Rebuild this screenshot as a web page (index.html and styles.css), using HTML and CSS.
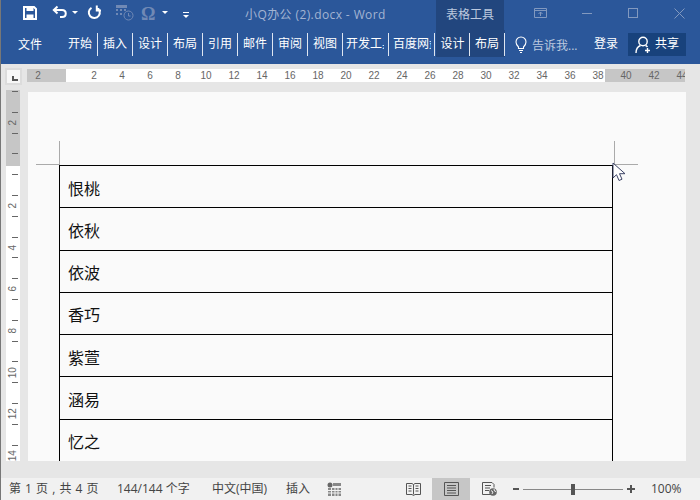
FILE: index.html
```html
<!DOCTYPE html>
<html lang="zh-CN">
<head>
  <meta charset="UTF-8" />
  <title>小Q办公 (2).docx - Word</title>
  <link rel="stylesheet" href="styles.css">
</head>
<body>
  <div class="app">
    <header class="ribbon">
      <div class="titlebar">
        <div class="qat">
          <svg class="ic-save" width="16" height="16" viewBox="0 0 16 16"><path d="M2 2h10l2 2v10H2z" fill="none" stroke="#fff" stroke-width="2"/><rect x="4.500" y="2" width="7" height="4" fill="#fff"/><rect x="4.500" y="9.500" width="7" height="4" fill="#fff"/></svg>
          <svg class="ic-undo" width="16" height="14" viewBox="0 0 16 14"><path d="M5.500 1.500 1.800 5l3.700 3.500M2.500 5H10c5 0 5 7 0 7H8" fill="none" stroke="#fff" stroke-width="2"/></svg>
          <span class="caret ic-c1"></span>
          <svg class="ic-redo" width="15" height="15" viewBox="0 0 15 15"><path d="M9.500 2.500a5.500 5.500 0 1 1-5 .3M9.800 .5v5H14" fill="none" stroke="#fff" stroke-width="2"/></svg>
          <svg class="ic-date" width="19" height="17" viewBox="0 0 19 17"><path d="M1 1h11v3H1zM1 5h2v2H1zM5 5h2v2H5zM9 5h2v2H9zM1 9h2v2H1zM5 9h2v2H5z" fill="#7089b5"/><circle cx="13.500" cy="11.500" r="4.500" fill="none" stroke="#7089b5"/><path d="M13.500 9v3h2" fill="none" stroke="#7089b5"/></svg>
          <span class="omega">Ω</span>
          <span class="caret ic-c2"></span>
          <span class="more ic-c3"></span>
        </div>
        <div class="doc-title">小Q办公 (2).docx - Word</div>
        <div class="tool-title">表格工具</div>
        <div class="win-btns">
          <svg class="w-opt" width="13" height="10" viewBox="0 0 13 10"><path d="M.5.500h12v9H.5zM.5 2.500h12M6.500 8V4M4.500 6l2-2 2 2" fill="none" stroke="#8299bf"/></svg>
          <span class="w-min"></span>
          <span class="w-max"></span>
          <svg class="w-close" width="11" height="11" viewBox="0 0 11 11"><path d="M.5.500l10 10M10.500.500l-10 10" fill="none" stroke="#8299bf"/></svg>
        </div>
      </div>
      <nav class="tabs">
        <div class="file-tab">文件</div>
        <div class="tab">开始</div>
        <div class="tab">插入</div>
        <div class="tab">设计</div>
        <div class="tab">布局</div>
        <div class="tab">引用</div>
        <div class="tab">邮件</div>
        <div class="tab">审阅</div>
        <div class="tab">视图</div>
        <div class="tab tab-wide tab-dev"><span>开发工具</span></div>
        <div class="tab tab-wide"><span>百度网盘</span></div>
        <div class="context-tabs">
          <div class="tab">设计</div>
          <div class="tab">布局</div>
        </div>
        <div class="tell">
          <svg width="12" height="17" viewBox="0 0 12 17"><path d="M3.500 11C2 9.500 1 8.500 1 6a5 5 0 0 1 10 0c0 2.500-1 3.500-2.500 5v1.500h-5zM4 14.500h4M5 16.500h2" fill="none" stroke="#fff" stroke-width="1.100"/></svg>
          <span>告诉我...</span>
        </div>
        <div class="signin">登录</div>
        <div class="share">
          <svg width="17" height="18" viewBox="0 0 17 18"><circle cx="8" cy="5.500" r="4.200" fill="none" stroke="#fff" stroke-width="1.400"/><path d="M1 17c0-4 2-6.500 4.500-7.500M10.500 9.500c.8.300 1.500.8 2 1.500M12.500 12v5M10 14.500h5" fill="none" stroke="#fff" stroke-width="1.400"/></svg>
          <span>共享</span>
        </div>
      </nav>
    </header>

    <main class="workspace">
      <div class="ruler-row">
        <div class="ruler-corner"><span class="tab-stop"></span></div>
        <div class="h-ruler">
          <span>2</span><span></span><span>2</span><span>4</span><span>6</span><span>8</span><span>10</span><span>12</span><span>14</span><span>16</span><span>18</span><span>20</span><span>22</span><span>24</span><span>26</span><span>28</span><span>30</span><span>32</span><span>34</span><span>36</span><span>38</span><span>40</span><span>42</span><span>44</span>
        </div>
      </div>
      <div class="doc-row">
        <div class="v-ruler">
          <span>2</span><span></span><span>2</span><span>4</span><span>6</span><span>8</span><span>10</span><span>12</span><span>14</span>
        </div>
        <div class="page">
          <i class="crop crop-lv"></i>
          <i class="crop crop-lh"></i>
          <i class="crop crop-rv"></i>
          <i class="crop crop-rh"></i>
          <table class="doc-table">
            <tr><td>恨桃</td></tr>
            <tr><td>依秋</td></tr>
            <tr><td>依波</td></tr>
            <tr><td>香巧</td></tr>
            <tr><td>紫萱</td></tr>
            <tr><td>涵易</td></tr>
            <tr><td>忆之</td></tr>
          </table>
          <svg class="cursor" width="14" height="20" viewBox="0 0 14 20"><path d="M1 1v15l3.500-3.300 2.500 5.800 3-1.300-2.500-5.500H13z" fill="#fff" stroke="#3d4466"/></svg>
        </div>
      </div>
    </main>

    <footer class="statusbar">
      <span class="st-page">第 1 页 , 共 4 页</span>
      <span class="st-words">144/144 个字</span>
      <span class="st-lang">中文(中国)</span>
      <span class="st-ins">插入</span>
      <svg class="st-macro" width="14" height="14" viewBox="0 0 14 14"><circle cx="3" cy="3" r="2.500" fill="#666"/><path d="M6 1h8v3H6zM1 6h13v8H1z" fill="#888"/><path d="M1 8.500h13M1 11h13M4.500 6v8M8 6v8M11 6v8" stroke="#f1f1f1"/></svg>
      <div class="st-views">
        <div class="view-btn">
          <svg width="15" height="14" viewBox="0 0 15 14"><path d="M.5 1.500h5.500l1.500 1 1.500-1h5.500v11H9l-1.500 1-1.500-1H.5zM7.500 2.500v10M2.500 4h3M2.500 6.500h3M2.500 9h3M9.500 4h3M9.500 6.500h3M9.500 9h3" fill="none" stroke="#555"/></svg>
        </div>
        <div class="view-btn view-on">
          <svg width="15" height="14" viewBox="0 0 15 14"><path d="M.5.500h14v13H.5zM3 3.500h9M3 6h9M3 8.500h9M3 11h9" fill="none" stroke="#555"/></svg>
        </div>
        <div class="view-btn">
          <svg width="15" height="14" viewBox="0 0 15 14"><path d="M9 12.500H.5V.500H10l2 2v3M3 3.500h6M3 6h5M3 8.500h4" fill="none" stroke="#555"/><circle cx="11" cy="10" r="3.800" fill="#666"/><path d="M9 8.500l2 1.500-1 2M12 7l.5 2 1.500.5" fill="none" stroke="#f1f1f1"/></svg>
        </div>
      </div>
      <div class="zoom-bar">
        <span class="z-minus"></span>
        <div class="z-track"><span class="z-thumb"></span></div>
        <span class="z-plus"></span>
      </div>
      <span class="st-zoom">100%</span>
    </footer>
  </div>
</body>
</html>
```

FILE: styles.css
```css
* { box-sizing: border-box; }
html, body { margin: 0; padding: 0; }
body { width: 700px; height: 500px; overflow: hidden; font-family: "Open Sans", "Noto Sans CJK SC", sans-serif; }
.app { width: 700px; height: 500px; border-left: 1px solid #777; display: flex; flex-direction: column; }

/* ribbon */
.ribbon { height: 64px; background: #2b579a; color: #fff; }
.titlebar { height: 30px; display: flex; }
.qat { width: 244px; height: 30px; display: flex; align-items: flex-start; padding-left: 21px; }
.ic-save { margin-top: 5px; }
.ic-undo { margin: 5px 0 0 14px; }
.caret { width: 0; height: 0; border-left: 3px solid transparent; border-right: 3px solid transparent; border-top: 3px solid #fff; margin-top: 11px; }
.ic-c1 { margin-left: 4px; }
.ic-redo { margin: 5px 0 0 9px; }
.ic-date { margin: 4px 0 0 13px; }
.omega { margin-left: 7px; width: 15px; font: bold 18px/28px "Liberation Serif", serif; color: #7089b5; }
.ic-c2 { margin-left: 6px; }
.more { width: 6px; height: 6px; margin: 12px 0 0 15px; border-top: 1px solid #fff; position: relative; }
.more::after { content: ""; position: absolute; left: 0; top: 2px; border-left: 3px solid transparent; border-right: 3px solid transparent; border-top: 3px solid #fff; }
.doc-title { width: 191px; font-size: 12px; line-height: 30px; letter-spacing: .4px; color: #a3b4d2; white-space: nowrap; }
.tool-title { width: 68px; height: 30px; background: #22467e; font-size: 12px; line-height: 30px; text-align: center; color: #bcc9df; }
.win-btns { display: flex; align-items: flex-start; padding-left: 30px; }
.w-opt { margin-top: 8px; }
.w-min { width: 10px; height: 1px; background: #8299bf; margin: 13px 0 0 35px; }
.w-max { width: 10px; height: 10px; border: 1px solid #8299bf; margin: 8px 0 0 36px; }
.w-close { margin: 8px 0 0 36px; }

.tabs { height: 34px; display: flex; align-items: flex-start; font-size: 12px; }
.file-tab { width: 61px; padding: 4px 3px 0 0; line-height: 22px; text-align: center; }
.tab { width: 35px; height: 23px; margin-top: 3px; border-right: 1px solid #dfe6f1; line-height: 22px; text-align: center; white-space: nowrap; }
.tabs > .file-tab + .tab { margin-left: 1px; }
.tab-wide { width: 46px; padding: 0 3px 0 4px; }
.tab-dev { padding: 0 4px 0 3px; }
.tab-wide span { display: block; overflow: hidden; text-align: left; }
.context-tabs { display: flex; width: 69px; height: 27px; margin-left: 1px; background: #22467e; }
.context-tabs .tab { width: 34px; }
.context-tabs .tab + .tab { width: 35px; }
.tell { display: flex; align-items: center; gap: 5px; width: 89px; height: 23px; margin-top: 3px; padding-left: 10px; color: #bcc9df; }
.tell svg { flex: none; }
.signin { width: 34px; height: 23px; margin-top: 3px; line-height: 22px; }
.share { display: flex; align-items: center; gap: 3px; width: 58px; height: 23px; margin-top: 3px; padding-left: 7px; background: #18427c; }
.share span { line-height: 20px; margin-top: -2px; }

/* rulers and page */
.workspace { height: 414px; background: #e6e6e6; padding: 4px 14px 0 4px; }
.ruler-row { display: flex; height: 17px; }
.ruler-corner { width: 17px; height: 17px; background: #f7f7f7; border: 2px solid #dcdcdc; margin-right: 5px; position: relative; }
.tab-stop { position: absolute; left: 5px; top: 6px; width: 6px; height: 5px; border-left: 2px solid #555; border-bottom: 2px solid #555; }
.h-ruler { width: 658px; height: 13px; margin-top: 1px; display: flex; overflow: hidden; background: linear-gradient(90deg, #c6c6c6 39px, #fff 39px, #fff 578px, #c6c6c6 578px); font: 10px/13px "Liberation Sans", sans-serif; color: #666; }
.h-ruler span { flex: none; width: 28px; text-align: center; }
.h-ruler span:first-child { margin-left: -3px; }

.doc-row { display: flex; margin-top: 7px; }
.v-ruler { width: 14px; height: 371px; margin: -2px 8px 0 1px; overflow: hidden; padding-top: 12px; font: 10px/12px "Liberation Sans", sans-serif; color: #666;
  background: repeating-linear-gradient(transparent 0, transparent 1px, #666 1px, #666 2px, transparent 2px, transparent 20.8px) 6px 0 / 6px 100% no-repeat,
    linear-gradient(#c6c6c6 76px, #fff 76px); }
.v-ruler span { display: block; height: 41.6px; text-align: center; line-height: 41.6px; transform: rotate(-90deg); }
.page { flex: 1; height: 369px; background: #fafafa; position: relative; overflow: hidden; padding: 73px 0 0 31px; }
.crop { position: absolute; background: #aaa; }
.crop-lv { left: 31px; top: 49px; width: 1px; height: 24px; }
.crop-lh { left: 8px; top: 72px; width: 23px; height: 1px; }
.crop-rv { left: 586px; top: 49px; width: 1px; height: 24px; }
.crop-rh { left: 586px; top: 72px; width: 24px; height: 1px; }
.doc-table { width: 554px; border-collapse: collapse; table-layout: fixed; }
.doc-table td { height: 42.25px; padding: 4px 0 0 8px; border: 1px solid #000; font-size: 16px; line-height: 20px; color: #111; }
.cursor { position: absolute; left: 584px; top: 70px; }

/* status bar */
.statusbar { height: 22px; display: flex; align-items: center; background: #f1f1f1; font-size: 12px; color: #444; white-space: nowrap; }
.statusbar > span { margin-top: -2px; }
.st-page { width: 116px; padding-left: 8px; word-spacing: 1px; }
.st-words { width: 95px; }
.st-lang { width: 74px; }
.st-ins { width: 41px; }
.st-macro { flex: none; }
.st-views { display: flex; height: 22px; margin-left: 53px; }
.view-btn { width: 38px; display: flex; align-items: center; justify-content: center; }
.view-on { background: #c6c6c6; }
.zoom-bar { display: flex; align-items: center; margin-left: 5px; }
.z-minus { width: 6px; height: 2px; background: #555; }
.z-track { width: 100px; height: 1px; margin: 0 4px; background: #888; position: relative; }
.z-thumb { position: absolute; left: 48px; top: -5px; width: 4px; height: 11px; background: #555; }
.z-plus { width: 8px; height: 8px; background: linear-gradient(#555, #555) 0 3px / 8px 2px no-repeat, linear-gradient(#555, #555) 3px 0 / 2px 8px no-repeat; }
.st-zoom { margin-left: 16px; }
```
